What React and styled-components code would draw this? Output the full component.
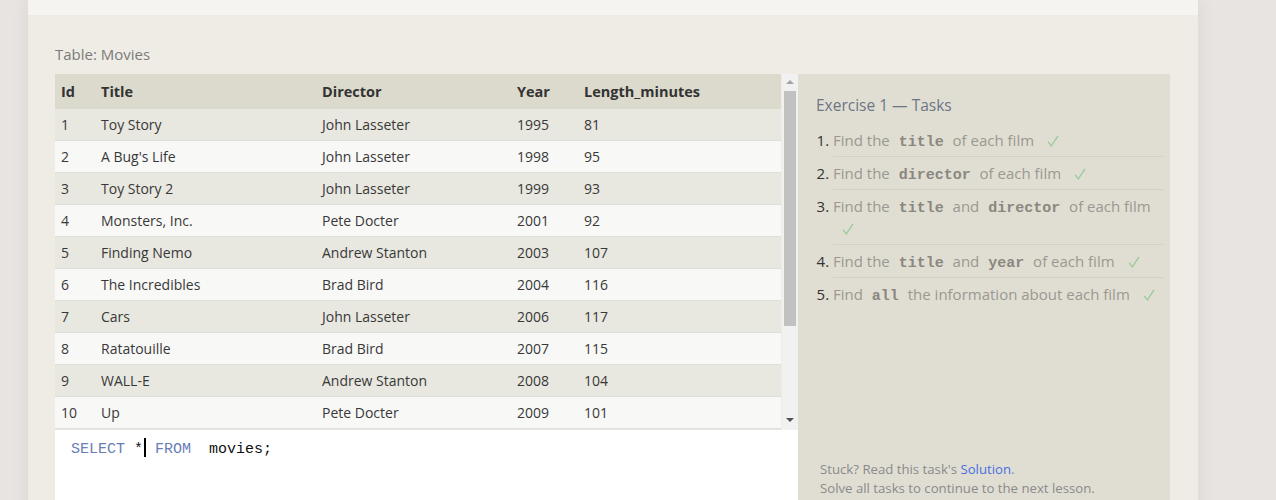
import React from "react";
import styled, { createGlobalStyle } from "styled-components";

const GlobalStyle = createGlobalStyle`
  html, body {
    margin: 0;
    padding: 0;
    background: #e8e4e1;
    font-family: "Open Sans", "Noto Sans", sans-serif;
    overflow: hidden;
  }
`;

const movies = [
  [1, "Toy Story", "John Lasseter", 1995, 81],
  [2, "A Bug's Life", "John Lasseter", 1998, 95],
  [3, "Toy Story 2", "John Lasseter", 1999, 93],
  [4, "Monsters, Inc.", "Pete Docter", 2001, 92],
  [5, "Finding Nemo", "Andrew Stanton", 2003, 107],
  [6, "The Incredibles", "Brad Bird", 2004, 116],
  [7, "Cars", "John Lasseter", 2006, 117],
  [8, "Ratatouille", "Brad Bird", 2007, 115],
  [9, "WALL-E", "Andrew Stanton", 2008, 104],
  [10, "Up", "Pete Docter", 2009, 101],
  [11, "Toy Story 3", "Lee Unkrich", 2010, 103],
  [12, "Cars 2", "John Lasseter", 2011, 120],
  [13, "Brave", "Brenda Chapman", 2012, 102],
  [14, "Monsters University", "Dan Scanlon", 2013, 110],
];

const tasks = [
  ["Find the ", ["title"], " of each film"],
  ["Find the ", ["director"], " of each film"],
  ["Find the ", ["title"], " and ", ["director"], " of each film"],
  ["Find the ", ["title"], " and ", ["year"], " of each film"],
  ["Find ", ["all"], " the information about each film"],
];

const Page = styled.div`
  width: 1170px;
  margin-left: 28px;
  box-shadow: 0 0 18px rgba(0, 0, 0, 0.07);
`;

const TopStrip = styled.div`
  height: 15px;
  background: #f5f4f0;
`;

const Lesson = styled.section`
  background: #efece5;
  border-radius: 3px 3px 0 0;
  padding: 29px 28px 0 27px;
`;

const Caption = styled.div`
  font-size: 15px;
  line-height: 20px;
  color: #7b7b7b;
  margin-bottom: 10px;
`;

const Workspace = styled.div`
  display: flex;
  align-items: stretch;
`;

const LeftColumn = styled.div`
  width: 743px;
  display: flex;
  flex-direction: column;
`;

const TableArea = styled.div`
  height: 356px;
  display: flex;
  overflow: hidden;
`;

const TableClip = styled.div`
  flex: 1;
  overflow: hidden;
`;

const Table = styled.table`
  width: 726px;
  border-collapse: collapse;
  table-layout: fixed;
  font-size: 14px;
  color: #383838;
`;

const Th = styled.th`
  box-sizing: border-box;
  width: ${(p) => p.$w || "auto"};
  height: 35px;
  padding: 0 0 0 6px;
  text-align: left;
  font-size: 14.5px;
  font-weight: 700;
  color: #333;
  background: #dbdacd;
`;

const Tr = styled.tr`
  background: ${(p) => (p.$odd ? "#e9e8e0" : "#f8f8f7")};
  border-bottom: 1px solid #dfdfdb;
`;

const Td = styled.td`
  height: 31px;
  padding: 0 0 0 6px;
  white-space: nowrap;
`;

const Scrollbar = styled.div`
  width: 16px;
  background: #f1f1f1;
  display: flex;
  flex-direction: column;
  align-items: center;
`;

const Arrow = styled.div`
  width: 0;
  height: 0;
  border-left: 4px solid transparent;
  border-right: 4px solid transparent;
  ${(p) =>
    p.$down
      ? "border-top: 4px solid #505050; margin-bottom: 8px;"
      : "border-bottom: 4px solid #a3a3a3; margin-top: 6px;"}
`;

const Thumb = styled.div`
  width: 12px;
  height: 235px;
  margin-top: 7px;
  background: #c1c1c1;
`;

const Track = styled.div`
  flex: 1;
`;

const Editor = styled.div`
  background: #fff;
  height: 85px;
  padding: 8px 16px;
  box-sizing: border-box;
  font-family: "Liberation Mono", "DejaVu Sans Mono", monospace;
  font-size: 15px;
  line-height: 20px;
  color: #111;
  white-space: pre;
`;

const Keyword = styled.span`
  color: #6a7db5;
`;

const Caret = styled.span`
  display: inline-block;
  width: 0;
  height: 19px;
  margin-left: 1px;
  border-left: 2px solid #000;
  vertical-align: -4px;
`;

const TaskPanel = styled.aside`
  width: 372px;
  background: #e0ded3;
  padding: 21px 7px 17px 18px;
  box-sizing: border-box;
  display: flex;
  flex-direction: column;
  justify-content: space-between;
`;

const TaskTitle = styled.h3`
  margin: 0 0 9px;
  font-size: 15.5px;
  font-weight: 400;
  line-height: 20px;
  color: #6d7686;
`;

const TaskList = styled.ol`
  margin: 0;
  padding: 0 0 0 17px;
`;

const Task = styled.li`
  font-size: 15px;
  line-height: 22px;
  padding: 5px 0;
  color: #9b9891;
  border-bottom: 1px solid ${(p) => (p.$last ? "transparent" : "#d3d1c6")};
  &::marker {
    color: #333;
  }
`;

const Code = styled.code`
  font-family: "Liberation Mono", "DejaVu Sans Mono", monospace;
  font-weight: 700;
  font-size: 15px;
  line-height: 1;
  color: #8b877f;
  padding: 0 5px;
`;

const CheckMark = styled.svg`
  display: inline-block;
  width: 12px;
  height: 12px;
  margin-left: 9px;
  vertical-align: -1px;
`;

const Check = () => (
  <CheckMark viewBox="0 0 12 12">
    <polyline
      points="1.2,6.8 4.3,11 11,0.8"
      fill="none"
      stroke="#93c893"
      strokeWidth="1.2"
      strokeLinejoin="round"
    />
  </CheckMark>
);

const Hint = styled.p`
  margin: 0;
  font-size: 13.2px;
  line-height: 19px;
  color: #8a8a8a;
  padding-left: 4px;
`;

const SolutionLink = styled.a`
  color: #4a6ee0;
  text-decoration: none;
`;

export default function App() {
  return (
    <>
      <GlobalStyle />
      <Page>
        <TopStrip />
        <Lesson>
          <Caption>Table: Movies</Caption>
          <Workspace>
            <LeftColumn>
              <TableArea>
                <TableClip>
                  <Table>
                    <thead>
                      <tr>
                        <Th $w="40px">Id</Th>
                        <Th $w="221px">Title</Th>
                        <Th $w="195px">Director</Th>
                        <Th $w="67px">Year</Th>
                        <Th>Length_minutes</Th>
                      </tr>
                    </thead>
                    <tbody>
                      {movies.map((m, i) => (
                        <Tr key={m[0]} $odd={i % 2 === 0}>
                          {m.map((v, j) => (
                            <Td key={j}>{v}</Td>
                          ))}
                        </Tr>
                      ))}
                    </tbody>
                  </Table>
                </TableClip>
                <Scrollbar>
                  <Arrow />
                  <Thumb />
                  <Track />
                  <Arrow $down />
                </Scrollbar>
              </TableArea>
              <Editor>
                <Keyword>SELECT</Keyword> *<Caret /> <Keyword>FROM</Keyword>  movies;
              </Editor>
            </LeftColumn>
            <TaskPanel>
              <div>
                <TaskTitle>Exercise 1 — Tasks</TaskTitle>
                <TaskList>
                  {tasks.map((parts, i) => (
                    <Task key={i} $last={i === tasks.length - 1}>
                      {parts.map((p, j) =>
                        Array.isArray(p) ? <Code key={j}>{p[0]}</Code> : p
                      )}{" "}
                      <Check />
                    </Task>
                  ))}
                </TaskList>
              </div>
              <div>
                <Hint>
                  Stuck? Read this task's <SolutionLink href="#">Solution</SolutionLink>.
                </Hint>
                <Hint>Solve all tasks to continue to the next lesson.</Hint>
              </div>
            </TaskPanel>
          </Workspace>
        </Lesson>
      </Page>
    </>
  );
}
